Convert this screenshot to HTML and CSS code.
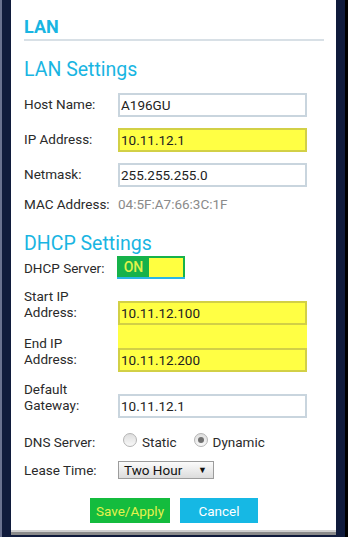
FILE: index.html
```html
<!DOCTYPE html>
<html lang="en">
<head>
  <meta charset="UTF-8"/>
  <meta name="viewport" content="width=device-width, initial-scale=1.0"/>
  <title>LAN | Router Settings</title>
  <link rel="stylesheet" href="styles.css">
</head>
<body>

  <main class="panel">
    <h1 class="page-title">LAN</h1>

    <!-- LAN Settings -->
    <h2 class="section-title">LAN Settings</h2>

    <div class="row row-input">
      <label class="row-label">Host Name:</label>
      <input class="text-input" type="text" value="A196GU"/>
    </div>

    <div class="row row-input">
      <label class="row-label">IP Address:</label>
      <input class="text-input highlight" type="text" value="10.11.12.1"/>
    </div>

    <div class="row row-input">
      <label class="row-label">Netmask:</label>
      <input class="text-input" type="text" value="255.255.255.0"/>
    </div>

    <div class="row row-text row-mac">
      <span class="row-label">MAC Address:</span>
      <span class="mac-value">04:5F:A7:66:3C:1F</span>
    </div>

    <!-- DHCP Settings -->
    <h2 class="section-title dhcp-title">DHCP Settings</h2>

    <div class="row row-toggle">
      <span class="row-label">DHCP Server:</span>
      <div class="toggle">
        <span class="toggle-on">ON</span>
        <span class="toggle-knob"></span>
      </div>
    </div>

    <div class="row row-input row-start">
      <label class="row-label">Start IP<br>Address:</label>
      <input class="text-input highlight" type="text" value="10.11.12.100"/>
    </div>

    <div class="row row-input">
      <label class="row-label">End IP<br>Address:</label>
      <div class="range-fill">
        <input class="text-input highlight" type="text" value="10.11.12.200"/>
      </div>
    </div>

    <div class="row row-input row-gateway">
      <label class="row-label">Default<br>Gateway:</label>
      <input class="text-input" type="text" value="10.11.12.1"/>
    </div>

    <div class="row row-text row-dns">
      <span class="row-label">DNS Server:</span>
      <div class="radio-group">
        <span class="radio"></span><span class="radio-text">Static</span>
        <span class="radio checked"></span><span class="radio-text">Dynamic</span>
      </div>
    </div>

    <div class="row row-text row-lease">
      <span class="row-label">Lease Time:</span>
      <div class="select-box">
        <span>Two Hour</span>
        <span class="select-arrow">&#9660;</span>
      </div>
    </div>

    <div class="actions">
      <button class="btn btn-save">Save/Apply</button>
      <button class="btn btn-cancel">Cancel</button>
    </div>
  </main>

</body>
</html>
```

FILE: styles.css
```css
* {
  margin: 0;
  padding: 0;
  box-sizing: border-box;
  font-family: 'Roboto', 'Liberation Sans', sans-serif;
}

html {
  background: #101b3c;
}

body {
  height: 537px;
  overflow: hidden;
  border-left: 2px solid #6a7290;
  border-right: 3px solid #000;
}

.panel {
  margin-left: 9px;
  margin-right: 9px;
  height: 532px;
  background: #fff;
  padding: 0 12px 0 13px;
  border-bottom: 2px solid #cfcfcf;
  box-shadow: 0 3px 0 #8a8a8a;
  color: #2a2a2a;
}

.page-title {
  padding-top: 16px;
  padding-bottom: 1px;
  font-size: 18px;
  line-height: 22px;
  font-weight: bold;
  color: #19b5e2;
  border-bottom: 2px solid #d8e0e6;
}

.section-title {
  margin-top: 17px;
  font-size: 19.5px;
  line-height: 24px;
  font-weight: normal;
  color: #19b5e2;
}

.dhcp-title {
  margin-top: 20px;
}

.row {
  display: flex;
  margin-top: 11px;
  font-size: 13.5px;
}

.row-label {
  width: 94px;
  flex-shrink: 0;
  line-height: 16px;
  color: #2a2a2a;
}

.row-input {
  align-items: flex-end;
}

.row-input .row-label {
  margin-bottom: 5px;
}

.row-text {
  align-items: center;
  line-height: 16px;
}

.text-input {
  width: 189px;
  height: 24px;
  padding: 0 1px;
  border: 2px solid #c9d5de;
  font-size: 13.5px;
  color: #222;
  background: #fff;
  outline: none;
}

.text-input.highlight {
  background: #ffff44;
  border-color: #d2d046;
}

.row-mac {
  margin-top: 9px;
}

.mac-value {
  color: #8a8a8a;
}

.row-toggle {
  margin-top: 0;
  align-items: center;
}

.toggle {
  display: flex;
  width: 68px;
  height: 23px;
  margin-left: -1px;
  padding: 2px 2px 0 1px;
  background: #16b24a;
  border-bottom: 2px solid #2ab6e6;
}

.toggle-on {
  width: 31px;
  font-size: 14px;
  font-weight: 500;
  line-height: 18px;
  text-align: center;
  color: #e2f24a;
}

.toggle-knob {
  flex: 1;
  background: #ffff40;
}

.row-start {
  margin-top: 9px;
}

.range-fill {
  width: 189px;
  padding-top: 23px;
  background: #ffff44;
}

.row-start + .row {
  margin-top: 0;
}

.row-gateway {
  margin-top: 9px;
}

.row-dns {
  margin-top: 16px;
}

.radio-group {
  display: flex;
  align-items: center;
}

.radio {
  width: 14px;
  height: 14px;
  margin-top: -4px;
  border-radius: 50%;
  border: 1px solid #b4b4b4;
  background: linear-gradient(#dedede, #f8f8f8);
  position: relative;
}

.radio:first-child {
  margin-left: 5px;
}

.radio.checked::after {
  content: "";
  position: absolute;
  top: 3px;
  left: 3px;
  width: 6px;
  height: 6px;
  border-radius: 50%;
  background: #707070;
}

.radio-text {
  margin-left: 5px;
  margin-right: 17px;
}

.row-lease {
  margin-top: 11px;
}

.select-box {
  display: flex;
  justify-content: space-between;
  align-items: center;
  width: 96px;
  height: 18px;
  padding: 0 6px 0 5px;
  border: 1px solid #9c9c9c;
  background: linear-gradient(#fbfbfb, #dcdcdc);
  color: #111;
}

.select-arrow {
  font-size: 9px;
}

.actions {
  display: flex;
  justify-content: center;
  gap: 10px;
  margin-top: 19px;
}

.btn {
  height: 25px;
  border: none;
  font-size: 13.5px;
  cursor: pointer;
}

.btn-save {
  width: 80px;
  background: #14bc3e;
  color: #e6f24c;
}

.btn-cancel {
  width: 78px;
  background: #16b8e4;
  color: #fff;
}
```
